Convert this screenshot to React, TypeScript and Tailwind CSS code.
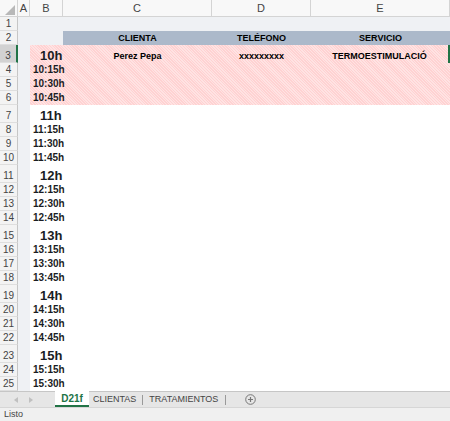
import React from 'react';

type Row = { n: number; h: 'tall' | 'small'; time?: string; big?: boolean; pink?: boolean };

const COLS = 'grid grid-cols-[18px_12px_33px_149px_99px_1fr]';
const PINK = 'bg-[repeating-linear-gradient(45deg,#ffd2d2_0_1px,#ffe3e3_1px_2px)] bg-fixed';

const rows: Row[] = [
  { n: 1, h: 'small' },
  { n: 2, h: 'small' },
];
[10, 11, 12, 13, 14, 15].forEach((hour, i) => {
  const base = 3 + i * 4;
  const pink = hour === 10;
  rows.push({ n: base, h: 'tall', time: `${hour}h`, big: true, pink });
  ['15', '30', '45'].forEach((m, j) => {
    if (base + j + 1 <= 25) rows.push({ n: base + j + 1, h: 'small', time: `${hour}:${m}h`, pink });
  });
});

function ColumnHeader() {
  return (
    <div className={`${COLS} h-[17px] bg-[#f8f8f8] border-b border-[#d4d4d4] text-[11px] text-[#444]`}>
      <div className="relative border-r border-[#d4d4d4]">
        <svg className="absolute right-[2px] bottom-[2px]" width="10" height="10" viewBox="0 0 10 10">
          <polygon points="10,0 10,10 0,10" fill="#b8b8b8" />
        </svg>
      </div>
      {['A', 'B', 'C', 'D', 'E'].map((c) => (
        <div key={c} className="flex items-center justify-center border-r border-[#d4d4d4]">
          {c}
        </div>
      ))}
    </div>
  );
}

function SheetRow({ row }: { row: Row }) {
  const height = row.h === 'tall' ? 'h-[18px]' : 'h-[14px]';
  const selected = row.n === 3;
  const light = row.n <= 2;
  const fill = row.pink ? PINK : light ? 'bg-[#eff1f4]' : 'bg-white';
  return (
    <div className={`${COLS} ${height}`}>
      <div
        className={`flex items-end justify-center pb-[1px] text-[10px] leading-none text-[#444] border-b border-[#dedede] ${
          selected ? 'bg-[#d2d2d2] border-r-2 border-r-[#217346]' : 'bg-[#f3f3f3] border-r border-r-[#c6c6c6]'
        }`}
      >
        {row.n}
      </div>
      <div className="bg-[#eff1f4]" />
      <div className={`relative ${fill}`}>
        {row.time && (
          <span
            className={`absolute bottom-0 whitespace-nowrap font-bold leading-none text-[#1a1d24] ${
              row.big ? 'left-[10px] bottom-[1px] text-[13px]' : 'left-[3px] bottom-[2px] text-[10px]'
            }`}
          >
            {row.time}
          </span>
        )}
      </div>
      {row.n === 2 ? (
        <>
          <HeaderCell label="CLIENTA" />
          <HeaderCell label="TELÉFONO" />
          <HeaderCell label="SERVICIO" />
        </>
      ) : row.n === 3 ? (
        <>
          <DataCell fill={fill} label="Perez Pepa" />
          <DataCell fill={fill} label="xxxxxxxxx" />
          <DataCell fill={fill} label="TERMOESTIMULACIÓ" edge />
        </>
      ) : (
        <>
          <div className={fill} />
          <div className={fill} />
          <div className={fill} />
        </>
      )}
    </div>
  );
}

function HeaderCell({ label }: { label: string }) {
  return (
    <div className="flex items-end justify-center pb-[2px] bg-[#acb9ca] text-[9px] font-bold leading-none text-black">
      {label}
    </div>
  );
}

function DataCell({ label, fill, edge }: { label: string; fill: string; edge?: boolean }) {
  return (
    <div
      className={`flex items-start justify-center pt-[7px] text-[9px] font-bold leading-none text-black ${fill} ${
        edge ? 'border-r-2 border-[#217346]' : ''
      }`}
    >
      {label}
    </div>
  );
}

function TabBar() {
  return (
    <div className="flex h-[16px] items-stretch bg-[#e6e6e6] border-t border-[#c6c6c6] text-[9px] text-[#444]">
      <div className="flex w-[55px] items-center gap-[11px] pl-[14px]">
        <svg width="4" height="6" viewBox="0 0 4 6">
          <polygon points="4,0 4,6 0,3" fill="#c0c0c0" />
        </svg>
        <svg width="4" height="6" viewBox="0 0 4 6">
          <polygon points="0,0 0,6 4,3" fill="#c0c0c0" />
        </svg>
      </div>
      <div className="flex w-[34px] items-center justify-center bg-white border-b-2 border-[#217346] text-[10px] font-bold text-[#217346] -mt-px">
        D21f
      </div>
      <div className="flex items-center pl-[4px]">
        <span>CLIENTAS</span>
        <span className="mx-[6px] h-[10px] w-px bg-[#9a9a9a]" />
        <span>TRATAMIENTOS</span>
        <span className="mx-[7px] h-[10px] w-px bg-[#9a9a9a]" />
      </div>
      <div className="flex items-center pl-[12px]">
        <svg width="11" height="11" viewBox="0 0 11 11">
          <circle cx="5.5" cy="5.5" r="4.8" fill="none" stroke="#777" strokeWidth="1" />
          <path d="M5.5 3v5M3 5.5h5" stroke="#777" strokeWidth="1.2" />
        </svg>
      </div>
    </div>
  );
}

export default function App() {
  return (
    <div className="h-[421px] w-[450px] overflow-hidden bg-white font-['Liberation_Sans',Arial,sans-serif]">
      <ColumnHeader />
      {rows.map((r) => (
        <SheetRow key={r.n} row={r} />
      ))}
      <TabBar />
      <div className="flex h-[14px] items-center bg-[#f0f0f0] border-t border-[#d6d6d6] pl-[4px] text-[9px] text-[#444]">
        Listo
      </div>
    </div>
  );
}
